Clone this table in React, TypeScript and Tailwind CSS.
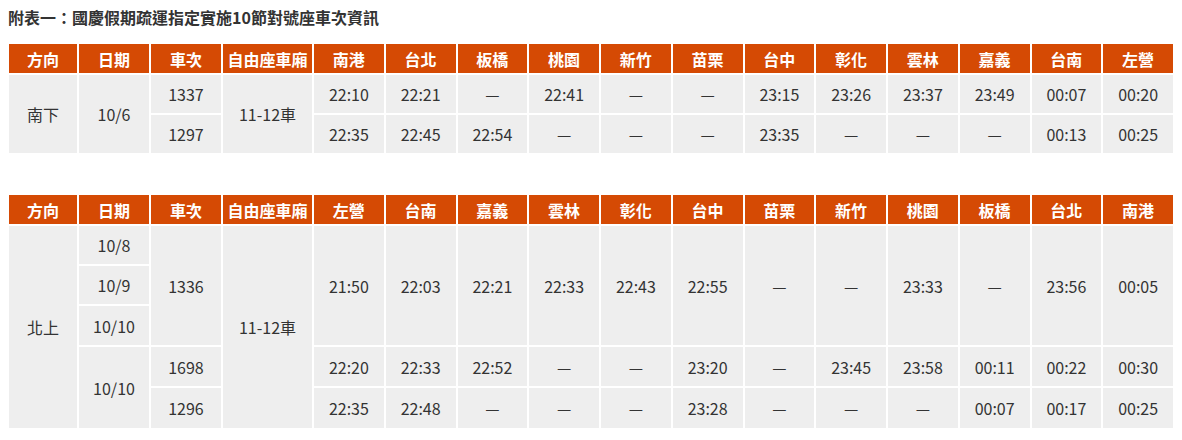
import React from 'react';

const FONT = { fontFamily: '"Noto Sans CJK TC", "Noto Sans", sans-serif' };

const southStations = ['南港', '台北', '板橋', '桃園', '新竹', '苗栗', '台中', '彰化', '雲林', '嘉義', '台南', '左營'];
const northStations = [...southStations].reverse();

const D = '—';

function Cols() {
  return (
    <colgroup>
      <col className="w-[70px]" />
      <col className="w-[72px]" />
      <col className="w-[72px]" />
      <col className="w-[91px]" />
      {southStations.map((s) => (
        <col key={s} />
      ))}
    </colgroup>
  );
}

function Head({ stations }: { stations: string[] }) {
  const cells = ['方向', '日期', '車次', '自由座車廂', ...stations];
  return (
    <thead>
      <tr className="h-[30px] bg-[#d54a04] text-white">
        {cells.map((c) => (
          <th key={c} className="border-2 border-white border-t-0 px-0 text-[16px] font-bold leading-none whitespace-nowrap">
            {c}
          </th>
        ))}
      </tr>
    </thead>
  );
}

const td = 'border-2 border-white text-center align-middle text-[16px] text-[#333]';

export default function App() {
  const south = [
    { no: '1337', times: ['22:10', '22:21', D, '22:41', D, D, '23:15', '23:26', '23:37', '23:49', '00:07', '00:20'] },
    { no: '1297', times: ['22:35', '22:45', '22:54', D, D, D, '23:35', D, D, D, '00:13', '00:25'] },
  ];
  const n1336 = ['21:50', '22:03', '22:21', '22:33', '22:43', '22:55', D, D, '23:33', D, '23:56', '00:05'];
  const n1698 = ['22:20', '22:33', '22:52', D, D, '23:20', D, '23:45', '23:58', '00:11', '00:22', '00:30'];
  const n1296 = ['22:35', '22:48', D, D, D, '23:28', D, D, D, '00:07', '00:17', '00:25'];

  return (
    <div className="bg-white px-[7px] pt-[6px]" style={FONT}>
      <h2 className="text-[16px] font-bold text-[#333] leading-[22px] ml-px">
        附表一：國慶假期疏運指定實施10節對號座車次資訊
      </h2>

      <table className="mt-[16px] w-full table-fixed border-collapse">
        <Cols />
        <Head stations={southStations} />
        <tbody className="bg-[#eeeeee]">
          {south.map((r, i) => (
            <tr key={r.no} className="h-[40px]">
              {i === 0 && (
                <>
                  <td rowSpan={2} className={td}>南下</td>
                  <td rowSpan={2} className={td}>10/6</td>
                </>
              )}
              <td className={td}>{r.no}</td>
              {i === 0 && <td rowSpan={2} className={td}>11-12車</td>}
              {r.times.map((t, j) => (
                <td key={j} className={td}>{t}</td>
              ))}
            </tr>
          ))}
        </tbody>
      </table>

      <table className="mt-[40px] w-full table-fixed border-collapse">
        <Cols />
        <Head stations={northStations} />
        <tbody className="bg-[#eeeeee]">
          <tr className="h-[40px]">
            <td rowSpan={5} className={td}>北上</td>
            <td className={td}>10/8</td>
            <td rowSpan={3} className={td}>1336</td>
            <td rowSpan={5} className={td}>11-12車</td>
            {n1336.map((t, j) => (
              <td key={j} rowSpan={3} className={td}>{t}</td>
            ))}
          </tr>
          <tr className="h-[40px]">
            <td className={td}>10/9</td>
          </tr>
          <tr className="h-[41px]">
            <td className={td}>10/10</td>
          </tr>
          <tr className="h-[41px]">
            <td rowSpan={2} className={td}>10/10</td>
            <td className={td}>1698</td>
            {n1698.map((t, j) => (
              <td key={j} className={td}>{t}</td>
            ))}
          </tr>
          <tr className="h-[42px]">
            <td className={td}>1296</td>
            {n1296.map((t, j) => (
              <td key={j} className={td}>{t}</td>
            ))}
          </tr>
        </tbody>
      </table>
    </div>
  );
}
